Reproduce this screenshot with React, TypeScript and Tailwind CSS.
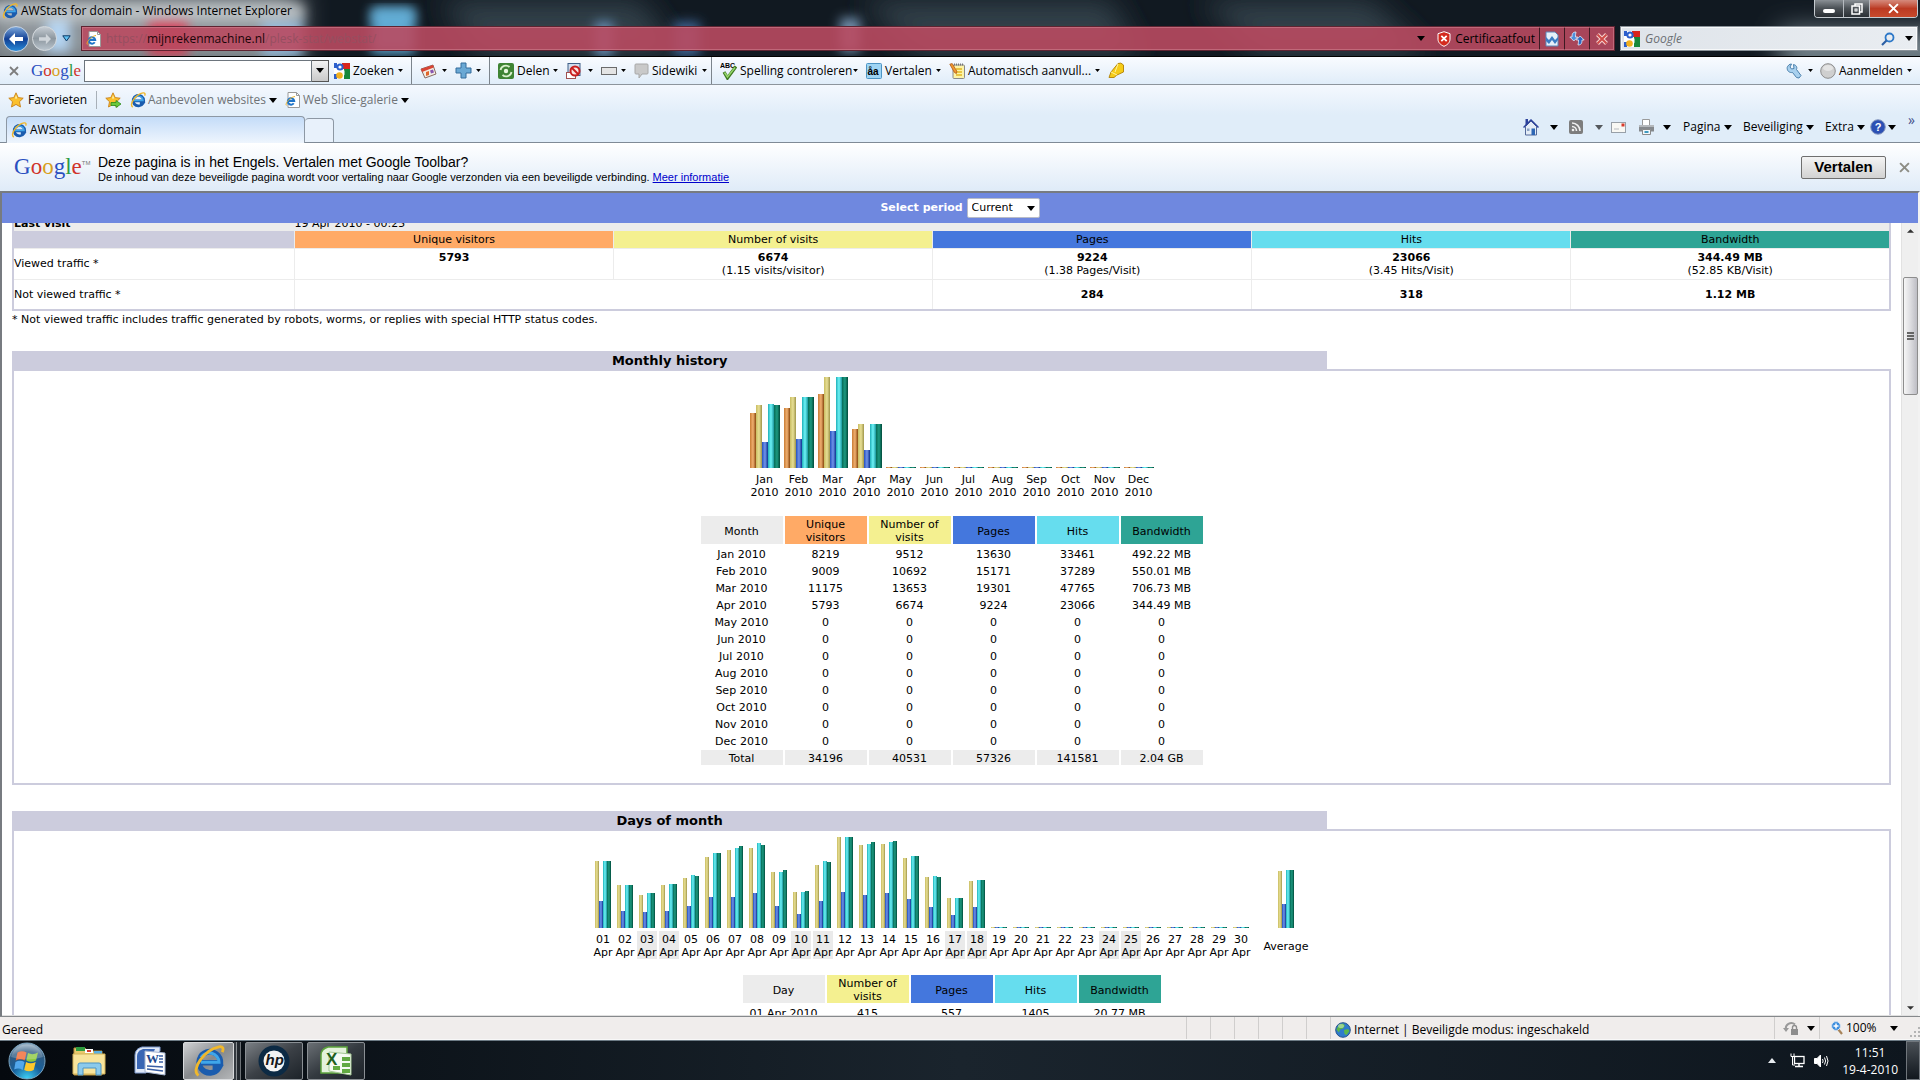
import { useState } from 'react';
import type { ReactNode } from 'react';

interface BarGroup {
  label: string;
  sub: string;
  heights: number[];
  weekend?: boolean;
}

const MONTH_CHART: BarGroup[] = [
  { label: 'Jan', sub: '2010', heights: [55, 63, 26, 64, 63] },
  { label: 'Feb', sub: '2010', heights: [60, 71, 29, 71, 71] },
  { label: 'Mar', sub: '2010', heights: [74, 91, 37, 91, 91] },
  { label: 'Apr', sub: '2010', heights: [39, 44, 18, 44, 44] },
  ...['May', 'Jun', 'Jul', 'Aug', 'Sep', 'Oct', 'Nov', 'Dec'].map((label) => ({
    label,
    sub: '2010',
    heights: [1, 1, 1, 1, 1],
  })),
];

const DAY_HEIGHTS = [
  [67, 27, 67, 67],
  [43, 17, 43, 43],
  [33, 16, 35, 35],
  [43, 17, 44, 44],
  [50, 22, 53, 52],
  [71, 31, 75, 75],
  [78, 31, 80, 82],
  [80, 35, 85, 83],
  [56, 22, 56, 58],
  [36, 14, 36, 37],
  [63, 27, 67, 66],
  [91, 36, 91, 91],
  [83, 33, 84, 86],
  [84, 35, 86, 87],
  [70, 29, 72, 72],
  [51, 21, 52, 51],
  [30, 13, 30, 30],
  [47, 21, 48, 48],
];

const WEEKEND_DAYS = [3, 4, 10, 11, 17, 18, 24, 25];

const DAY_CHART: BarGroup[] = Array.from({ length: 30 }, (_, i) => ({
  label: String(i + 1).padStart(2, '0'),
  sub: 'Apr',
  heights: DAY_HEIGHTS[i] ?? [1, 1, 1, 1],
  weekend: WEEKEND_DAYS.includes(i + 1),
}));

const MONTH_ROWS = [
  ['Jan 2010', '8219', '9512', '13630', '33461', '492.22 MB'],
  ['Feb 2010', '9009', '10692', '15171', '37289', '550.01 MB'],
  ['Mar 2010', '11175', '13653', '19301', '47765', '706.73 MB'],
  ['Apr 2010', '5793', '6674', '9224', '23066', '344.49 MB'],
  ['May 2010', '0', '0', '0', '0', '0'],
  ['Jun 2010', '0', '0', '0', '0', '0'],
  ['Jul 2010', '0', '0', '0', '0', '0'],
  ['Aug 2010', '0', '0', '0', '0', '0'],
  ['Sep 2010', '0', '0', '0', '0', '0'],
  ['Oct 2010', '0', '0', '0', '0', '0'],
  ['Nov 2010', '0', '0', '0', '0', '0'],
  ['Dec 2010', '0', '0', '0', '0', '0'],
];

const BAR_COLORS = [
  'bg-linear-to-r from-[#c97c34] via-[#f0b070] to-[#8a4806]',
  'bg-linear-to-r from-[#c9bd62] via-[#e8df94] to-[#a0964a]',
  'bg-linear-to-r from-[#2450c0] via-[#7294ea] to-[#0c3290]',
  'bg-linear-to-r from-[#18b0b8] via-[#6cf4f8] to-[#14989e]',
  'bg-linear-to-r from-[#066c58] via-[#1c9a80] to-[#024a3a]',
];

/* ---------- icons ---------- */

function Arrow({ small = false, className = 'text-black' }: { small?: boolean; className?: string }) {
  return (
    <svg width={small ? 5 : 8} height={small ? 3 : 5} viewBox="0 0 8 5" className={`shrink-0 ${className}`} aria-hidden="true">
      <path d="M0 0h8L4 5z" fill="currentColor" />
    </svg>
  );
}

function IeLogo({ size = 16 }: { size?: number }) {
  return (
    <svg width={size} height={size} viewBox="0 0 16 16" className="shrink-0" aria-hidden="true">
      <path d="M4 8.9h9.7A5.300 5.300 0 1 0 13 11.300H9.800" fill="none" stroke="#1a5cae" strokeWidth="2.800" />
      <path d="M4 8.600h9A4.900 4.900 0 0 0 4 6.200" fill="none" stroke="#3fa6ea" strokeWidth="1.500" />
      <path d="M2.800 15.200C-1.500 12.600 5.800 2.200 13 .9c2-.3 2.500 1 1.600 2.700" fill="none" stroke="#f0b82c" strokeWidth="1.400" />
    </svg>
  );
}

function PageIcon() {
  return (
    <svg width="16" height="16" viewBox="0 0 16 16" className="shrink-0" aria-hidden="true">
      <path d="M3 .5h8.500l3 3v12H3z" fill="#fff" stroke="#9a9a9a" />
      <path d="M11.500.5v3h3" fill="none" stroke="#9a9a9a" />
      <path d="M3.200 9h6a3.200 3.200 0 1 0-.5 2.200" fill="none" stroke="#1f74c8" strokeWidth="2" />
      <path d="M1.500 13.500C-.5 12 5 5 10 4.500" fill="none" stroke="#efb42a" />
    </svg>
  );
}

function GoogleG() {
  return (
    <svg width="16" height="16" viewBox="0 0 16 16" className="shrink-0" aria-hidden="true">
      <rect width="16" height="16" fill="#fff" />
      <path d="M8 0h8v6H8z" fill="#d8241c" />
      <path d="M10 6h6v10h-6z" fill="#17883a" />
      <path d="M0 0h3v5H0zM0 11h3v5H0z" fill="#2c5fcc" />
      <circle cx="6" cy="4" r="3.600" fill="#2c5fcc" />
      <circle cx="6" cy="4" r="1.600" fill="#fff" />
      <circle cx="5.500" cy="12.500" r="3.300" fill="#f2b01e" />
      <path d="M8 7.500h2.500v5z" fill="#fff" />
    </svg>
  );
}

function GoogleWord({ className }: { className: string }) {
  return (
    <span className={`font-['Liberation_Serif',serif] ${className}`}>
      <span className="text-[#2a4fc0]">G</span>
      <span className="text-[#d0342c]">o</span>
      <span className="text-[#d8a01c]">o</span>
      <span className="text-[#2a4fc0]">g</span>
      <span className="text-[#2e9a44]">l</span>
      <span className="text-[#d0342c]">e</span>
    </span>
  );
}

function Star({ add = false }: { add?: boolean }) {
  return (
    <svg width="16" height="16" viewBox="0 0 16 16" className="shrink-0" aria-hidden="true">
      <path d="M8 .8l2.200 4.800 5 .6-3.700 3.500 1 5.300L8 12.400 3.500 15l1-5.300L.8 6.200l5-.6z" fill="#fbc02d" stroke="#c8811a" strokeWidth=".9" />
      <path d="M8 3l1.200 3.500H7z" fill="#fff3b0" />
      {add && <path d="M6 10.500h5V8.500l5 3.500-5 3.500v-2H6z" fill="#6cc83c" stroke="#2c8a1c" strokeWidth=".8" />}
    </svg>
  );
}

function CloseX({ size = 11, color = '#6e6e6e' }: { size?: number; color?: string }) {
  return (
    <svg width={size} height={size} viewBox="0 0 10 10" aria-hidden="true">
      <path d="M1 1l8 8M9 1L1 9" stroke={color} strokeWidth="1.800" />
    </svg>
  );
}

/* ---------- browser chrome ---------- */

function GlassBackdrop() {
  return (
    <svg className="absolute inset-0 h-full w-full" viewBox="0 0 1920 56" preserveAspectRatio="none" aria-hidden="true">
      <defs>
        <filter id="soft" x="-50%" y="-50%" width="200%" height="200%">
          <feGaussianBlur stdDeviation="6" />
        </filter>
        <filter id="softer" x="-20%" y="-80%" width="140%" height="260%">
          <feGaussianBlur stdDeviation="14" />
        </filter>
      </defs>
      <rect width="1920" height="56" fill="#111921" />
      <g filter="url(#softer)">
        <path d="M440 0h200l40 56H480zM860 0h250l30 56H920zM1200 0h170l60 56h-170z" fill="#333f49" />
        <rect x="-20" y="-10" width="320" height="80" fill="#8d949a" />
        <rect x="1780" y="30" width="180" height="40" fill="#7c8a92" />
      </g>
      <g filter="url(#soft)">
        <rect x="46" y="14" width="24" height="38" fill="#b4d4f2" />
        <rect x="148" y="16" width="40" height="40" fill="#d23c55" />
        <rect x="262" y="18" width="40" height="38" fill="#8fb8da" />
        <rect x="595" y="22" width="18" height="34" fill="#6890b8" />
        <rect x="674" y="22" width="26" height="34" fill="#3f6696" />
        <rect x="840" y="18" width="20" height="34" fill="#7493b0" />
      </g>
      <rect x="371" y="8" width="44" height="46" rx="4" fill="#5fa9d2" filter="url(#soft)" />
      <rect x="372" y="9" width="42" height="12" fill="#68b4dc" opacity=".7" filter="url(#soft)" />
      <rect x="-10" y="3" width="315" height="18" rx="9" fill="#c6cbce" opacity=".85" filter="url(#soft)" />
    </svg>
  );
}

function TitleArea() {
  return (
    <header className="relative h-[57px] shrink-0 border-b border-black">
      <GlassBackdrop />
      <div className="relative flex h-[26px] items-start justify-between pl-[2px]">
        <div className="flex items-center gap-[3px] pt-[2px]">
          <IeLogo />
          <h1 className="text-[12px] leading-[18px] text-black">AWStats for domain - Windows Internet Explorer</h1>
        </div>
        <div className="mr-[2px] flex h-[18px] overflow-hidden rounded-b border border-t-0 border-[#c5cbd0]">
          <button type="button" aria-label="Minimize" className="flex w-[29px] items-end justify-center border-r border-[#b5babf] bg-linear-to-b from-[#8a9095] via-[#4a5055] to-[#2b3035] pb-1">
            <span className="h-[4px] w-[12px] rounded-xs bg-white" />
          </button>
          <button type="button" aria-label="Restore" className="flex w-[26px] items-center justify-center border-r border-[#b5babf] bg-linear-to-b from-[#8a9095] via-[#4a5055] to-[#2b3035]">
            <svg width="12" height="12" viewBox="0 0 12 12" fill="none" stroke="#fff" strokeWidth="1.500" aria-hidden="true">
              <path d="M4 3V1h7v8H9" />
              <rect x="1" y="3" width="7.500" height="8" />
              <rect x="4" y="6" width="2" height="2" strokeWidth="1" />
            </svg>
          </button>
          <button type="button" aria-label="Close" className="flex w-[47px] items-center justify-center bg-linear-to-b from-[#d58a7c] via-[#bb3a22] to-[#c84a2c]">
            <CloseX size={11} color="#ffffff" />
          </button>
        </div>
      </div>
      <div className="relative flex h-[25px] items-center pr-[2px] pl-[3px]">
        <button type="button" aria-label="Back" className="flex size-[26px] items-center justify-center rounded-full border border-[#c8d4e2] bg-linear-to-b from-[#7ea8da] via-[#123f94] to-[#2a8ad8]">
          <svg width="16" height="14" viewBox="0 0 16 14" aria-hidden="true">
            <path d="M7 1L1 7l6 6v-4h8V5H7z" fill="#fff" />
          </svg>
        </button>
        <button type="button" aria-label="Forward" className="ml-[3px] flex size-[25px] items-center justify-center rounded-full border border-[#d5dade] bg-linear-to-b from-[#c5ccd3] via-[#8d979f] to-[#b9c4cd]">
          <svg width="14" height="12" viewBox="0 0 16 14" aria-hidden="true">
            <path d="M9 1l6 6-6 6v-4H1V5h8z" fill="#cfd5da" />
          </svg>
        </button>
        <button type="button" aria-label="Recent pages" className="mr-[10px] ml-[5px]">
          <svg width="9" height="7" viewBox="0 0 9 7" aria-hidden="true">
            <path d="M.8.8h7.400L4.500 6z" fill="#5fc0f2" stroke="#0d3a66" />
          </svg>
        </button>
        <div className="flex h-[25px] flex-1 items-center border border-[#5f2331] bg-[#b94a60]/90 outline-1 -outline-offset-2 outline-[#d88a98]/50">
          <span className="mr-[4px] ml-[4px]"><PageIcon /></span>
          <p className="flex-1 text-[12px] text-[#964f60]">
            https://<span className="text-[#1a0508]">mijnrekenmachine.nl</span>/plesk-stat/webstat/
          </p>
          <Arrow />
          <button type="button" className="flex items-center gap-[4px] pr-[4px] pl-[12px] text-[12px] text-black">
            <svg width="14" height="16" viewBox="0 0 14 16" aria-hidden="true">
              <path d="M7 .7l6 2v5.500c0 3.500-2.800 5.800-6 7.100-3.200-1.300-6-3.600-6-7.100V2.700z" fill="#d42a1e" stroke="#fff" />
              <path d="M4.300 4.800l5.400 5.400M9.700 4.800l-5.400 5.400" stroke="#fff" strokeWidth="1.800" />
            </svg>
            Certificaatfout
          </button>
          <button type="button" aria-label="Compatibility view" className="flex h-full w-[25px] items-center justify-center border-l border-[#3c1a22]">
            <svg width="14" height="16" viewBox="0 0 14 16" aria-hidden="true">
              <path d="M1 1h9l3 3v11H1z" fill="#e6effa" stroke="#5d86b8" />
              <path d="M1 6l3 3 3-4 3 4 3-3v3l-3 4-3-4-3 4-3-3z" fill="#3c7cc4" />
            </svg>
          </button>
          <button type="button" aria-label="Refresh" className="flex h-full w-[25px] items-center justify-center border-l border-[#3c1a22]">
            <svg width="16" height="15" viewBox="0 0 16 15" aria-hidden="true">
              <path d="M7 1C3.500 1 3 3 3 6H.8l4 4 4-4H6.500c0-2 0-3 .5-5z" fill="#4f8fdc" stroke="#e4effc" strokeWidth=".8" />
              <path d="M9 14c3.500 0 4-2 4-5h2.200l-4-4-4 4h2.300c0 2 0 3-.5 5z" fill="#2e68c0" stroke="#e4effc" strokeWidth=".8" />
            </svg>
          </button>
          <button type="button" aria-label="Stop" className="flex h-full w-[25px] items-center justify-center border-l border-[#3c1a22]">
            <svg width="14" height="14" viewBox="0 0 14 14" aria-hidden="true">
              <path d="M2.500 2.500l9 9M11.500 2.500l-9 9" stroke="#f6d4d0" strokeWidth="4" />
              <path d="M2.500 2.500l9 9M11.500 2.500l-9 9" stroke="#cf4a48" strokeWidth="2" />
            </svg>
          </button>
        </div>
        <div className="ml-[5px] flex h-[25px] w-[298px] items-center border border-[#8a9299] bg-linear-to-r from-[#dfe4ea] to-[#e9edf1] pr-[4px] pl-[3px] outline-1 -outline-offset-2 outline-white/70">
          <GoogleG />
          <input aria-label="Google" placeholder="Google" className="ml-[5px] min-w-0 flex-1 bg-transparent text-[12px] italic outline-none placeholder:text-[#6b6f73]" />
          <button type="button" aria-label="Search">
            <svg width="14" height="14" viewBox="0 0 14 14" fill="none" aria-hidden="true">
              <circle cx="8.500" cy="5.500" r="4" stroke="#2c78c8" strokeWidth="1.800" />
              <path d="M5.500 8.500L1 13" stroke="#2b5fa4" strokeWidth="2.200" />
            </svg>
          </button>
          <span className="ml-[10px]"><Arrow /></span>
        </div>
      </div>
    </header>
  );
}

interface ToolProps {
  width: string;
  icon: ReactNode;
  label?: string;
  name?: string;
}

function Tool({ width, icon, label, name }: ToolProps) {
  return (
    <button type="button" aria-label={name} className={`flex shrink-0 items-center justify-between text-[12px] whitespace-nowrap ${width}`}>
      <span className="flex items-center gap-[3px]">
        {icon}
        {label}
      </span>
      <Arrow small />
    </button>
  );
}

function GoogleToolbar() {
  const [query, setQuery] = useState('');

  return (
    <div className="flex h-7 shrink-0 items-center border-b border-[#8d949c] bg-linear-to-b from-[#f9fbff] to-[#e0edf9] pr-2 pl-[9px]">
      <button type="button" aria-label="Close toolbar"><CloseX size={10} color="#7d7d7d" /></button>
      <GoogleWord className="ml-3 w-[53px] text-[17px] leading-[24px]" />
      <input
        aria-label="Search Google"
        value={query}
        onChange={(e) => setQuery(e.target.value)}
        className="h-[22px] w-[228px] border border-[#6d757d] bg-white px-1 text-[12px] outline-none"
      />
      <button type="button" aria-label="Search history" className="flex h-[22px] w-[17px] items-center justify-center border border-l-0 border-[#555] bg-linear-to-b from-[#f4f4f4] to-[#c9c9c9]">
        <Arrow />
      </button>
      <div className="flex h-full items-center gap-[8px] pl-[5px]">
        <Tool width="w-[69px]" icon={<GoogleG />} label="Zoeken" />
        <span className="h-full w-px bg-[#7c848c]" />
        <Tool
          width="w-[27px]"
          name="Gadgets"
          icon={
            <svg width="17" height="16" viewBox="0 0 17 16" aria-hidden="true">
              <path d="M1 6l12-4 3 9-11 4z" fill="#f3ede2" stroke="#8a6a62" />
              <path d="M1 6l12-4 .8 2.500L2 9z" fill="#d84434" />
              <path d="M6 9l3-1v4l-3 1z" fill="#e0662c" />
              <path d="M10 7.500l3-1 1 3-3 1z" fill="#8855b0" />
            </svg>
          }
        />
        <Tool
          width="w-[26px]"
          name="Add"
          icon={
            <svg width="17" height="17" viewBox="0 0 17 17" aria-hidden="true">
              <path d="M6 1h5v5h5v5h-5v5H6v-5H1V6h5z" fill="#6aa8d4" stroke="#356c9c" />
            </svg>
          }
        />
        <span className="h-full w-px bg-[#7c848c]" />
        <Tool
          width="w-[60px]"
          label="Delen"
          icon={
            <svg width="16" height="16" viewBox="0 0 16 16" aria-hidden="true">
              <rect width="16" height="16" rx="2" fill="#3f8434" />
              <path d="M2.500 7A5.500 5.500 0 0 1 11.500 4M13.500 9A5.500 5.500 0 0 1 4.500 12" fill="none" stroke="#d9f0cc" strokeWidth="1.800" />
              <circle cx="8" cy="8" r="2.200" fill="#eaf7e0" />
            </svg>
          }
        />
        <Tool
          width="w-[27px]"
          name="Pop-up blocker"
          icon={
            <svg width="17" height="16" viewBox="0 0 17 16" aria-hidden="true">
              <rect x="2" y=".5" width="12" height="12" fill="#cfdcec" stroke="#3f5f88" />
              <rect x=".5" y="9.500" width="9" height="6" fill="#fff" stroke="#a05050" />
              <circle cx="9" cy="8" r="4.500" fill="#fbe3e0" stroke="#c81e1e" strokeWidth="2" />
              <path d="M6 5l6 6" stroke="#c81e1e" strokeWidth="2" />
            </svg>
          }
        />
        <Tool
          width="w-[25px]"
          name="Bookmark"
          icon={
            <svg width="16" height="10" viewBox="0 0 16 10" aria-hidden="true">
              <rect x=".5" y="1.500" width="15" height="7" fill="#e4e4e4" stroke="#6b6b6b" />
            </svg>
          }
        />
        <Tool
          width="w-[73px]"
          label="Sidewiki"
          icon={
            <svg width="15" height="16" viewBox="0 0 15 16" aria-hidden="true">
              <path d="M2 1h11a1 1 0 0 1 1 1v8a1 1 0 0 1-1 1H8l-3 4v-4H2a1 1 0 0 1-1-1V2a1 1 0 0 1 1-1z" fill="#c9c9c9" stroke="#a8a8a8" />
            </svg>
          }
        />
        <span className="-ml-[4px] h-full w-px bg-[#7c848c]" />
        <Tool
          width="w-[138px]"
          label="Spelling controleren"
          icon={
            <svg width="17" height="18" viewBox="0 0 17 18" aria-hidden="true">
              <text x="0" y="6" fontSize="7" fontWeight="bold" fontFamily="Liberation Sans, sans-serif">ABC</text>
              <path d="M4 10l3.500 6L16 4.500" fill="none" stroke="#3e7a22" strokeWidth="3.200" />
              <path d="M4.500 10.500L7.500 15 15 5.500" fill="none" stroke="#96d66a" strokeWidth="1.500" />
            </svg>
          }
        />
        <Tool
          width="w-[75px]"
          label="Vertalen"
          icon={
            <svg width="16" height="16" viewBox="0 0 16 16" aria-hidden="true">
              <rect x=".5" y=".5" width="15" height="15" rx="1" fill="#9ed4f4" stroke="#4c94c4" />
              <text x="1.500" y="12" fontSize="10" fontWeight="bold" fontFamily="Liberation Sans, sans-serif">åa</text>
            </svg>
          }
        />
        <Tool
          width="w-[151px]"
          label="Automatisch aanvull..."
          icon={
            <svg width="16" height="16" viewBox="0 0 16 16" aria-hidden="true">
              <rect x="4" y="2" width="11.500" height="13.500" rx="1" fill="#fdf3a8" stroke="#8a8a8a" />
              <path d="M7 6h6M7 9h6M7 12h6" stroke="#e2b822" strokeWidth="1.500" />
              <path d="M5 1.500h10" stroke="#777" strokeDasharray="1 1" strokeWidth="2" />
              <path d="M.8 1.200l2.400-.6 4.600 7.600-.4 2.400-2-1.200z" fill="#f09a30" stroke="#b05818" strokeWidth=".8" />
            </svg>
          }
        />
        <button type="button" aria-label="Highlighter">
          <svg width="17" height="17" viewBox="0 0 17 17" aria-hidden="true">
            <path d="M1 15.500L3 10 10 1.500q3-1.500 5.500 1.500v7L9 13l-3 2.500z" fill="#f6cc18" stroke="#b88a10" />
            <path d="M3 10l6 3M10 2l-3 8" stroke="#fff2a0" fill="none" />
          </svg>
        </button>
      </div>
      <div className="ml-auto flex items-center gap-[7px]">
        <Tool
          width="w-[27px]"
          name="Options"
          icon={
            <svg width="16" height="16" viewBox="0 0 16 16" aria-hidden="true">
              <path d="M5.500 1L4 4l1.500 2L8 5.500 7.500 1.500c2.500.5 4 2.500 3 5L15 12.500 13 15l-2.500-.5L6.500 9.500C3.500 10 .8 8 1.200 4.500 1.500 3 3.500.8 5.500 1z" fill="#a8d0ee" stroke="#4b80ac" />
            </svg>
          }
        />
        <Tool
          width="w-[92px]"
          label="Aanmelden"
          icon={
            <svg width="16" height="16" viewBox="0 0 16 16" aria-hidden="true">
              <circle cx="8" cy="8" r="7.300" fill="#cfcfcf" stroke="#8d8d8d" />
              <ellipse cx="8" cy="5" rx="5" ry="3" fill="#e4e4e4" />
            </svg>
          }
        />
      </div>
    </div>
  );
}

function FavoritesBar() {
  return (
    <nav className="flex h-[30px] shrink-0 items-center bg-linear-to-b from-[#f4f8fe] to-[#e0edf9] pl-[8px] text-[12px] whitespace-nowrap">
      <button type="button" className="flex w-[89px] items-center gap-[4px] border-r border-[#a8b0b8]">
        <Star />
        Favorieten
      </button>
      <button type="button" aria-label="Add to favorites" className="mr-[9px] ml-[8px]"><Star add /></button>
      <button type="button" className="flex w-[147px] items-center justify-between text-[#6f7377]">
        <span className="flex items-center gap-[2px]"><IeLogo />Aanbevolen websites</span>
        <Arrow />
      </button>
      <button type="button" className="ml-[8px] flex w-[124px] items-center justify-between text-[#6f7377]">
        <span className="flex items-center gap-[2px]"><PageIcon />Web Slice-galerie</span>
        <Arrow />
      </button>
    </nav>
  );
}

function TabRow() {
  return (
    <div className="flex h-[28px] shrink-0 items-end border-b border-[#7f8a96] bg-[#e0edf9] pl-[6px] text-[12px]">
      <div role="tab" className="-mb-px flex h-[27px] w-[299px] items-center gap-[3px] rounded-t-sm border border-b-0 border-[#8d98a4] bg-linear-to-b from-[#c4dcf8] to-[#eef5fd] pl-[4px]">
        <IeLogo />
        AWStats for domain
      </div>
      <button type="button" aria-label="New tab" className="h-[24px] w-[29px] rounded-t-sm border border-b-0 border-l-0 border-[#8d98a4] bg-[#e8f1fb]" />
      <div className="ml-auto flex h-[27px] items-center pr-[5px] pb-[3px]">
        <button type="button" className="mr-[11px] flex items-center gap-[11px]" aria-label="Home">
          <svg width="16" height="17" viewBox="0 0 16 17" aria-hidden="true">
            <path d="M2.500 7.500L8 2l5.500 5.500V16h-11z" fill="#e4ecf6" stroke="#53699a" />
            <path d="M.5 8.500L8 1l7.500 7.500" fill="none" stroke="#2d429c" strokeWidth="1.500" />
            <path d="M2.500 0H5v4l-2.500 2z" fill="#2d429c" />
            <path d="M8.500 9.500h3.500V16H8.500z" fill="#2d66b4" />
            <path d="M4 9.500h2.500V12H4z" fill="#8aa2c4" />
          </svg>
          <Arrow />
        </button>
        <button type="button" className="mr-[8px] flex items-center gap-[12px]" aria-label="Feeds">
          <svg width="14" height="14" viewBox="0 0 14 14" fill="none" aria-hidden="true">
            <rect width="14" height="14" rx="2" fill="#7d7d7d" />
            <path d="M3 3a8 8 0 0 1 8 8M3 6.500A4.500 4.500 0 0 1 7.500 11" stroke="#f0f0f0" strokeWidth="1.600" />
            <circle cx="4" cy="10" r="1.300" fill="#f0f0f0" />
          </svg>
          <Arrow className="text-[#55595d]" />
        </button>
        <button type="button" className="mr-[12px]" aria-label="Read mail">
          <svg width="15" height="11" viewBox="0 0 15 11" aria-hidden="true">
            <rect x=".5" y=".5" width="14" height="10" fill="#f8f8f4" stroke="#98a0a8" />
            <rect x="10.500" y="1.500" width="3" height="3" fill="#d83a2c" />
            <path d="M3 7h5" stroke="#b8bcc0" />
          </svg>
        </button>
        <button type="button" className="mr-[12px] flex items-center gap-[8px]" aria-label="Print">
          <svg width="17" height="16" viewBox="0 0 17 16" aria-hidden="true">
            <path d="M4.500.5h7v6h-7z" fill="#fff" stroke="#9a9a9a" />
            <path d="M1 6h15v6.500H1z" fill="#85898d" />
            <path d="M1 6h15v2H1z" fill="#b4b8bc" />
            <path d="M4.500 10.500h8v5h-8z" fill="#f4f8fb" stroke="#8a8a8a" />
            <path d="M6.500 12h4v2h-4z" fill="#3f9ac0" />
          </svg>
          <Arrow />
        </button>
        <button type="button" className="flex w-[60px] items-center gap-[3px]">Pagina<Arrow /></button>
        <button type="button" className="flex w-[82px] items-center gap-[3px]">Beveiliging<Arrow /></button>
        <button type="button" className="flex w-[45px] items-center gap-[3px]">Extra<Arrow /></button>
        <button type="button" className="mr-[12px] flex items-center gap-[2px]" aria-label="Help">
          <svg width="16" height="16" viewBox="0 0 16 16" aria-hidden="true">
            <circle cx="8" cy="8" r="7.300" fill="#2c50b4" stroke="#8b9cc0" />
            <text x="4.800" y="12.200" fontSize="11" fontWeight="bold" fill="#fff" fontFamily="Liberation Sans, sans-serif">?</text>
          </svg>
          <Arrow />
        </button>
        <button type="button" aria-label="More" className="self-start text-[14px] leading-[10px] text-[#44508a]">»</button>
      </div>
    </div>
  );
}

function TranslateBar() {
  return (
    <div className="flex h-[48px] shrink-0 items-center bg-linear-to-b from-[#fff] to-[#dfebf8] font-['Liberation_Sans',sans-serif] text-black">
      <div className="flex w-[98px] items-start pl-[14px]">
        <GoogleWord className="text-[23px] leading-[32px]" />
        <span className="pt-[8px] text-[6px] leading-[8px] text-[#777]">TM</span>
      </div>
      <div className="pt-[3px]">
        <p className="text-[14px] leading-[16px]">Deze pagina is in het Engels. Vertalen met Google Toolbar?</p>
        <p className="text-[11px] leading-[14px]">
          De inhoud van deze beveiligde pagina wordt voor vertaling naar Google verzonden via een beveiligde verbinding.
          <a href="#info" className="ml-[3px] text-[#0000cc] underline">Meer informatie</a>
        </p>
      </div>
      <button type="button" className="ml-auto h-[23px] w-[85px] rounded-xs border border-[#6f6f6f] bg-linear-to-b from-[#f4f4f4] to-[#d2d2d2] text-[15px] leading-[20px] font-bold">
        Vertalen
      </button>
      <button type="button" aria-label="Close" className="mr-[10px] ml-[13px]"><CloseX color="#8d8d85" /></button>
    </div>
  );
}

/* ---------- statistics page ---------- */

function SectionTitle({ children }: { children: ReactNode }) {
  return (
    <h2 className="flex h-[18px] w-[70%] items-center justify-center bg-[#ccccdd] pt-[2px] text-[13px] leading-[16px] font-bold">
      {children}
    </h2>
  );
}

function Bars({ heights, wide = false }: { heights: number[]; wide?: boolean }) {
  const colors = BAR_COLORS.slice(BAR_COLORS.length - heights.length);

  return (
    <div className="flex h-[91px] items-end">
      {heights.map((height, i) => (
        <span key={i} className={`${wide ? 'w-[6px]' : 'w-[4px]'} ${colors[i]}`} style={{ height }} />
      ))}
    </div>
  );
}

function Chart({ groups, wide = false, children }: { groups: BarGroup[]; wide?: boolean; children?: ReactNode }) {
  return (
    <div className="flex justify-center gap-[2px] pt-[6px]">
      {groups.map((group) => (
        <div key={group.label} className={`flex flex-col items-center ${wide ? 'w-[32px]' : 'w-[20px]'}`}>
          <Bars heights={group.heights} wide={wide} />
          <div className={`mt-[3px] w-full pt-[2px] text-center leading-[13px] ${group.weekend ? 'bg-[#eaeaea]' : ''}`}>
            {group.label}
            <br />
            {group.sub}
          </div>
        </div>
      ))}
      {children}
    </div>
  );
}

const HEAD_COLORS: Record<string, string> = {
  'Unique visitors': 'bg-[#ffaa66]',
  'Number of visits': 'bg-[#f4f090]',
  Pages: 'bg-[#4477dd]',
  Hits: 'bg-[#66ddee]',
  Bandwidth: 'bg-[#2ea495]',
};

function DataTable({ head, rows, total }: { head: string[]; rows: string[][]; total?: string[] }) {
  return (
    <table className="mx-auto table-fixed border-separate border-spacing-[2px] text-center leading-[13px]">
      <thead>
        <tr>
          {head.map((name) => (
            <th key={name} scope="col" className={`h-[28px] w-[82px] px-[8px] pt-[2px] font-normal ${HEAD_COLORS[name] ?? 'bg-[#ececec]'}`}>
              {name}
            </th>
          ))}
        </tr>
      </thead>
      <tbody>
        {rows.map((row) => (
          <tr key={row[0]}>
            {row.map((cell, i) => (
              <td key={i} className="h-[15px] pt-[2px] whitespace-nowrap">{cell}</td>
            ))}
          </tr>
        ))}
        {total && (
          <tr>
            {total.map((cell, i) => (
              <td key={i} className="h-[15px] bg-[#ececec] pt-[2px]">{cell}</td>
            ))}
          </tr>
        )}
      </tbody>
    </table>
  );
}

function Value({ main, note }: { main: string; note?: string }) {
  return (
    <td className="border border-[#ececec] pt-[2px] align-top">
      <b>{main}</b>
      <br />
      {note}
    </td>
  );
}

function Summary() {
  return (
    <section>
      <table className="w-full table-fixed border-collapse border-2 border-t-0 border-[#ccccdd] text-center leading-[13px]">
        <colgroup>
          <col className="w-[15%]" />
          <col className="w-[17%]" />
          <col className="w-[17%]" />
          <col className="w-[17%]" />
          <col className="w-[17%]" />
          <col className="w-[17%]" />
        </colgroup>
        <tbody>
          <tr className="h-[18px] bg-[#ececec] text-left align-bottom">
            <th scope="row" className="font-bold">Last visit</th>
            <td colSpan={5}>19 Apr 2010 - 00:25</td>
          </tr>
          <tr className="h-[18px]">
            <td className="border border-[#ececec] bg-[#ccccdd]" />
            {Object.keys(HEAD_COLORS).map((name) => (
              <th key={name} scope="col" className={`border border-[#ececec] font-normal ${HEAD_COLORS[name]}`}>{name}</th>
            ))}
          </tr>
          <tr className="h-[31px]">
            <th scope="row" className="border border-[#ececec] text-left font-normal">Viewed traffic *</th>
            <Value main="5793" />
            <Value main="6674" note="(1.15 visits/visitor)" />
            <Value main="9224" note="(1.38 Pages/Visit)" />
            <Value main="23066" note="(3.45 Hits/Visit)" />
            <Value main="344.49 MB" note="(52.85 KB/Visit)" />
          </tr>
          <tr className="h-[31px]">
            <th scope="row" className="border border-[#ececec] text-left font-normal">Not viewed traffic *</th>
            <td colSpan={2} className="border border-[#ececec]" />
            <td className="border border-[#ececec] font-bold">284</td>
            <td className="border border-[#ececec] font-bold">318</td>
            <td className="border border-[#ececec] font-bold">1.12 MB</td>
          </tr>
        </tbody>
      </table>
      <p className="pt-px leading-[15px]">
        * Not viewed traffic includes traffic generated by robots, worms, or replies with special HTTP status codes.
      </p>
    </section>
  );
}

function StatsPage() {
  return (
    <div className="-mt-[11px] mr-[10px] ml-[10px] flex-1 text-[11px] text-black">
      <Summary />
      <section className="mt-[24px]">
        <SectionTitle>Monthly history</SectionTitle>
        <div className="border-2 border-[#ccccdd] pb-[16px]">
          <Chart groups={MONTH_CHART} wide />
          <div className="mt-[15px]">
            <DataTable
              head={['Month', 'Unique visitors', 'Number of visits', 'Pages', 'Hits', 'Bandwidth']}
              rows={MONTH_ROWS}
              total={['Total', '34196', '40531', '57326', '141581', '2.04 GB']}
            />
          </div>
        </div>
      </section>
      <section className="mt-[26px]">
        <SectionTitle>Days of month</SectionTitle>
        <div className="border-2 border-[#ccccdd] pb-[16px]">
          <Chart groups={DAY_CHART}>
            <div className="ml-[9px] flex w-[48px] flex-col items-center">
              <Bars heights={[57, 24, 58, 58]} />
              <span className="mt-[12px] leading-[13px]">Average</span>
            </div>
          </Chart>
          <div className="mt-[14px]">
            <DataTable
              head={['Day', 'Number of visits', 'Pages', 'Hits', 'Bandwidth']}
              rows={[
                ['01 Apr 2010', '415', '557', '1405', '20.77 MB'],
              ]}
            />
          </div>
        </div>
      </section>
    </div>
  );
}

function ScrollBar() {
  return (
    <div className="flex w-[17px] shrink-0 flex-col items-center border-l border-[#e2e2e2] bg-[#efefef] pt-[6px] pb-[5px]">
      <svg width="7" height="4" viewBox="0 0 8 4" aria-hidden="true"><path d="M0 4l4-4 4 4z" fill="#333" /></svg>
      <div className="mt-[44px] flex h-[118px] w-[15px] flex-col items-center justify-center gap-px rounded-xs border border-[#8d8d8d] bg-linear-to-r from-[#f6f6f6] via-[#dcdce0] to-[#bdbdc4]">
        <span className="h-[2px] w-[7px] bg-[#666]" />
        <span className="h-[2px] w-[7px] bg-[#666]" />
        <span className="h-[2px] w-[7px] bg-[#666]" />
      </div>
      <svg width="7" height="4" viewBox="0 0 8 4" className="mt-auto" aria-hidden="true"><path d="M0 0l4 4 4-4z" fill="#333" /></svg>
    </div>
  );
}

function PageFrame() {
  return (
    <main className="flex min-h-0 flex-1 flex-col border-t-2 border-r-2 border-l-2 border-[#777b80] border-r-[#f2f2f2] bg-white font-['DejaVu_Sans',sans-serif]">
      <form className="flex h-[30px] shrink-0 items-center justify-center gap-[4px] bg-[#6f88df]">
        <label htmlFor="period" className="text-[11px] leading-[18px] font-bold text-white">Select period</label>
        <div className="relative flex h-[20px] w-[73px]">
          <select id="period" className="block h-[20px] w-full appearance-none rounded-xs border border-[#b8bcc8] bg-white pl-[4px] text-[11px] leading-[18px] text-black">
            <option>Current</option>
          </select>
          <span className="pointer-events-none absolute top-0 right-[5px] flex h-full items-center"><Arrow /></span>
        </div>
      </form>
      <div className="flex min-h-0 flex-1 overflow-hidden border-b border-[#e0e0e0]">
        <StatsPage />
        <ScrollBar />
      </div>
    </main>
  );
}

/* ---------- bottom ---------- */

function StatusBar() {
  return (
    <footer className="flex h-[24px] shrink-0 items-stretch border-t border-b border-t-[#86898c] border-b-[#f8f8f8] bg-[#f0edec] pl-[2px] text-[12px]">
      <span className="mr-auto flex items-center pt-[3px]">Gereed</span>
      {[1, 2, 3, 4, 5, 6].map((n) => (
        <span key={n} className="w-[24px] border-l border-[#d0cecd]" />
      ))}
      <span className="flex w-[444px] items-center gap-[3px] border-l border-[#d0cecd] pt-[3px] pl-[4px]">
        <svg width="16" height="16" viewBox="0 0 16 16" aria-hidden="true">
          <circle cx="8" cy="8" r="7.300" fill="#2f7ccc" stroke="#28548c" />
          <path d="M4 2.500l4-1 2 2-2 3-3 1-1 3-2.500-3zM9 8l4-1 1.500 2-3 4-2-1z" fill="#5cb848" />
          <ellipse cx="6" cy="4" rx="3" ry="2" fill="#fff" opacity=".4" />
        </svg>
        Internet | Beveiligde modus: ingeschakeld
      </span>
      <button type="button" aria-label="Privacy report" className="flex w-[45px] items-center gap-[7px] border-l border-[#d0cecd] pl-[8px]">
        <svg width="17" height="15" viewBox="0 0 17 15" aria-hidden="true">
          <path d="M3 9A5.500 5.500 0 0 1 12 3.500" fill="none" stroke="#9a9a9a" strokeWidth="2" />
          <path d="M0 7h6l-3 4z" fill="#9a9a9a" />
          <rect x="8" y="8" width="7" height="6" fill="#8d8d8d" />
          <path d="M9.500 8V6.500a2 2 0 0 1 4 0V8" fill="none" stroke="#8d8d8d" strokeWidth="1.400" />
        </svg>
        <Arrow />
      </button>
      <button type="button" className="flex w-[101px] items-center border-l border-[#d0cecd] pl-[11px]">
        <svg width="12" height="14" viewBox="0 0 12 14" aria-hidden="true">
          <path d="M7 8l4 5" stroke="#a8845a" strokeWidth="2.200" />
          <circle cx="5" cy="5" r="4.400" fill="#3d8ede" stroke="#cfdff0" />
          <path d="M5 2.500v5M2.500 5h5" stroke="#fff" strokeWidth="1.500" />
        </svg>
        <span className="mr-[13px] ml-[3px]">100%</span>
        <Arrow />
        <svg width="10" height="10" viewBox="0 0 10 10" className="mt-2 ml-3" fill="#b4b4b4" aria-hidden="true">
          <path d="M8 0h2v2H8zM4 4h2v2H4zM8 4h2v2H8zM0 8h2v2H0zM4 8h2v2H4zM8 8h2v2H8z" />
        </svg>
      </button>
    </footer>
  );
}

function WindowsOrb() {
  return (
    <svg width="38" height="38" viewBox="0 0 38 38" aria-hidden="true">
      <defs>
        <radialGradient id="orb" cx=".5" cy="1" r=".95">
          <stop offset="0" stopColor="#3fd4f8" />
          <stop offset=".45" stopColor="#17609c" />
          <stop offset=".8" stopColor="#2f5a80" />
          <stop offset="1" stopColor="#90aabf" />
        </radialGradient>
      </defs>
      <circle cx="19" cy="19" r="18" fill="url(#orb)" stroke="#7aa4c0" />
      <path d="M9.500 10.500q4.500-2.500 9 0l-1.800 8q-4.500-2.500-9 0z" fill="#f0642c" />
      <path d="M20 11q4.500 2.500 10-.5l-2 8q-5 2.500-9.700 0z" fill="#8cc83c" />
      <path d="M7.500 20q4.500-2.500 9 0l-1.800 8q-4-2.500-8.500-.5z" fill="#52a8ec" />
      <path d="M18 20q4.500 2.500 9.700 0l-2 8q-4.700 2.500-9.500 0z" fill="#fcc82c" />
      <path d="M3 15a16.500 16.500 0 0 1 32 0q-16 5-32 0z" fill="#fff" opacity=".22" />
    </svg>
  );
}

function Taskbar() {
  return (
    <div className="flex h-[40px] shrink-0 items-center border-t border-[#6d7b85] bg-linear-to-r from-[#05090e] via-[#1a242d] to-[#0e161e] text-white">
      <button type="button" aria-label="Start" className="ml-[8px]"><WindowsOrb /></button>
      <button type="button" aria-label="Explorer" className="ml-[26px]">
        <svg width="34" height="32" viewBox="0 0 34 32" aria-hidden="true">
          <path d="M2 3h11l2 3h15v24H2z" fill="#e8c96c" stroke="#b8923c" />
          <path d="M4 2h9v4H4z" fill="#2f9c40" />
          <path d="M13 4h8v4h-8z" fill="#fff" />
          <path d="M15 5h4v2h-4z" fill="#d83c2c" />
          <path d="M22 6h8v3h-8z" fill="#5ab0e4" />
          <path d="M1 9h32v20H1z" fill="#f8e49c" stroke="#d4b258" />
          <path d="M6 30V20q0-2 2-2h19q2 0 2 2v10h-5v-7H11v7z" fill="#8ccaec" stroke="#4c94c4" />
        </svg>
      </button>
      <button type="button" aria-label="Word" className="ml-[28px]">
        <svg width="32" height="32" viewBox="0 0 32 32" aria-hidden="true">
          <path d="M8 2h18v4l-14 22H1V10q0-6 7-8z" fill="#dfe8f6" stroke="#7c98cc" />
          <path d="M9 4h12l-9 20H3V11q0-5 6-7z" fill="#3a66b4" />
          <path d="M11 6l20 2v22l-20-3z" fill="#fff" stroke="#a4b4d0" />
          <text x="12" y="18" fontSize="13" fontWeight="bold" fill="#22488e" fontFamily="Liberation Serif, serif">W</text>
          <path d="M25 11h4M25 14h4M25 17h4M13 21l16 1M13 24l16 2" stroke="#3a5fa4" strokeWidth="1.600" />
        </svg>
      </button>
      <button type="button" aria-label="Internet Explorer" className="ml-[17px] flex h-[38px] w-[51px] items-center justify-center rounded-xs border border-[#d8dadc] bg-linear-to-br from-[#d0d2d4] via-[#86898c] to-[#b4b6b8]">
        <IeLogo size={32} />
      </button>
      <span className="h-[38px] w-[3px] border-r border-[#888d91] bg-[#33393f]" />
      <span className="h-[38px] w-[4px] border-r border-[#6d7277] bg-[#22282e]" />
      <button type="button" aria-label="HP" className="ml-[4px] flex h-[38px] w-[58px] items-center justify-center rounded-xs border border-[#8a8f94] bg-linear-to-br from-[#7a7f84] via-[#3b4046] to-[#1d2329]">
        <svg width="32" height="32" viewBox="0 0 32 32" aria-hidden="true">
          <circle cx="16" cy="16" r="15.500" fill="#0c2a44" />
          <circle cx="16" cy="16" r="10.500" fill="#f4f4f4" />
          <text x="7.500" y="20" fontSize="15" fontWeight="bold" fontStyle="italic" fill="#15181b" fontFamily="Liberation Sans, sans-serif">hp</text>
        </svg>
      </button>
      <button type="button" aria-label="Excel" className="ml-[4px] flex h-[38px] w-[58px] items-center justify-center rounded-xs border border-[#8a8f94] bg-linear-to-br from-[#6a6f74] via-[#343a40] to-[#1d2329]">
        <svg width="32" height="32" viewBox="0 0 32 32" aria-hidden="true">
          <path d="M8 2h19v26H1V10q0-6 7-8z" fill="#e4f2dc" stroke="#5ca43c" strokeWidth="1.500" />
          <path d="M9 7l22 2v21L9 26z" fill="#f6fbf2" stroke="#a4c894" />
          <path d="M22 12h8v4h-8zM22 18h8v4h-8zM22 24h8v4h-8zM13 21h7v4h-7z" fill="#62aa42" />
          <text x="6" y="20" fontSize="17" fontWeight="bold" fill="#22601c" fontFamily="Liberation Sans, sans-serif">X</text>
        </svg>
      </button>
      <div className="ml-auto flex h-full items-center">
        <button type="button" aria-label="Show hidden icons" className="mr-[14px]">
          <svg width="8" height="5" viewBox="0 0 8 5" aria-hidden="true"><path d="M0 5l4-5 4 5z" fill="#e8ecf0" /></svg>
        </button>
        <button type="button" aria-label="Network" className="mr-[9px]">
          <svg width="15" height="15" viewBox="0 0 15 15" fill="none" stroke="#fff" aria-hidden="true">
            <rect x="4.500" y="3.500" width="9.500" height="7" strokeWidth="1.300" />
            <path d="M5 13.500h8M9 11v2" strokeWidth="1.500" />
            <path d="M1 .5v3h3v-3M2.500 4v8H5" />
          </svg>
        </button>
        <button type="button" aria-label="Volume" className="mr-[13px]">
          <svg width="15" height="14" viewBox="0 0 15 14" fill="none" stroke="#fff" aria-hidden="true">
            <path d="M.5 4.500H3L6.500 1v12L3 9.500H.5z" fill="#fff" />
            <path d="M8.500 5q1.300 2 0 4M10.500 3.500q2.200 3.500 0 7M12.500 2q3 5 0 10" />
          </svg>
        </button>
        <time className="mr-[8px] text-center text-[12px] leading-[17px]">
          11:51
          <br />
          19-4-2010
        </time>
        <button type="button" aria-label="Show desktop" className="h-full w-[14px] border border-[#70767c] bg-linear-to-b from-[#4a5056] to-[#12181e]" />
      </div>
    </div>
  );
}

export default function App() {
  return (
    <div className="flex h-screen flex-col overflow-hidden bg-white font-['Open_Sans',sans-serif] text-black">
      <TitleArea />
      <GoogleToolbar />
      <FavoritesBar />
      <TabRow />
      <TranslateBar />
      <PageFrame />
      <StatusBar />
      <Taskbar />
    </div>
  );
}
